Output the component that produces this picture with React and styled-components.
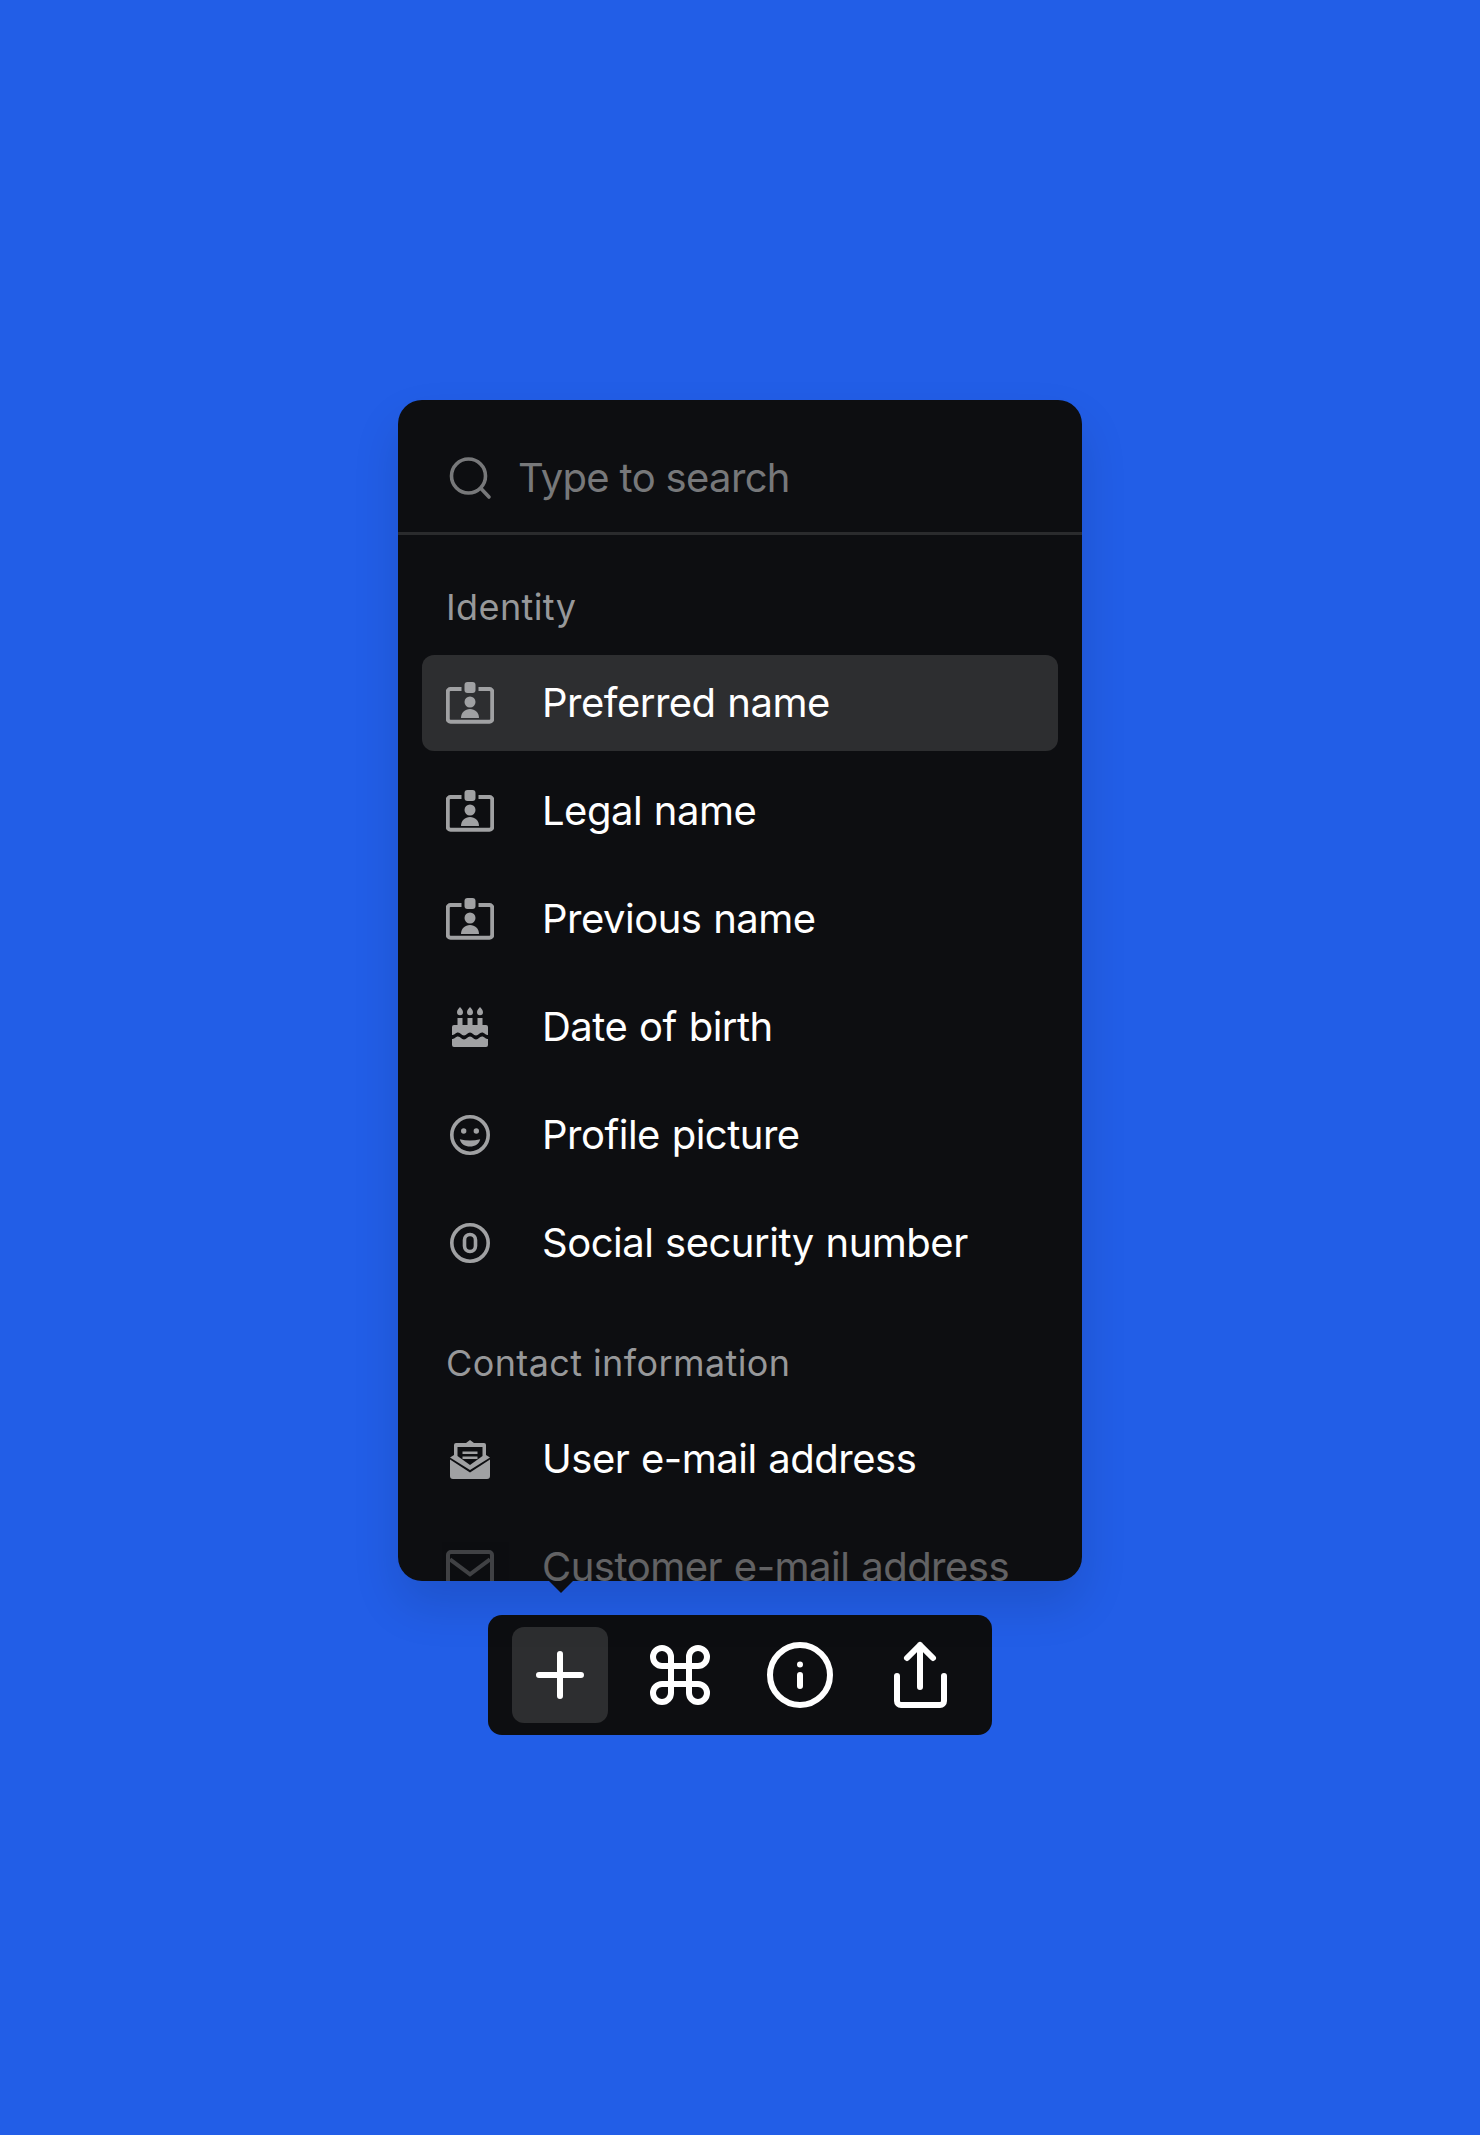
import React from 'react';
import styled, { createGlobalStyle } from 'styled-components';

const GlobalStyle = createGlobalStyle`
  html, body {
    margin: 0;
    padding: 0;
    background: #225ee7;
    font-family: Inter, "Liberation Sans", sans-serif;
  }
`;

const Page = styled.div`
  display: flex;
  flex-direction: column;
  align-items: center;
  justify-content: center;
  gap: 34px;
  height: 2135px;
  background: #225ee7;
`;

const Panel = styled.div`
  position: relative;
  width: 684px;
  height: 1181px;
  border-radius: 24px;
  box-shadow: 0 24px 48px rgba(0, 0, 0, 0.12);

  &::after {
    content: '';
    position: absolute;
    left: 151px;
    bottom: -12px;
    border-left: 12px solid transparent;
    border-right: 12px solid transparent;
    border-top: 12px solid #0d0e11;
  }
`;

const PanelBody = styled.div`
  height: 100%;
  border-radius: 24px;
  background: #0d0e11;
  overflow: hidden;
`;

const Search = styled.div`
  display: flex;
  align-items: center;
  gap: 24px;
  padding: 54px 48px 30px;
  border-bottom: 3px solid #2a2b2d;
`;

const Placeholder = styled.span`
  font-size: 40px;
  line-height: 48px;
  letter-spacing: -0.65px;
  color: #77787a;
`;

const Section = styled.div`
  display: flex;
  flex-direction: column;
  gap: 12px;
  padding: 48px 24px 0;
`;

const Label = styled.div`
  height: 48px;
  margin-bottom: 12px;
  padding-left: 24px;
  font-size: 36px;
  line-height: 48px;
  letter-spacing: 0.4px;
  color: #97989a;
`;

const Row = styled.div`
  display: flex;
  align-items: center;
  gap: 48px;
  flex: none;
  height: 96px;
  padding: 0 24px;
  border-radius: 12px;
  background: ${p => (p.$active ? '#2d2e30' : 'transparent')};
  opacity: ${p => (p.$dim ? 0.35 : 1)};
`;

const RowText = styled.span`
  font-size: 40px;
  line-height: 48px;
  font-weight: 425;
  letter-spacing: -0.5px;
  word-spacing: 1px;
  color: #fff;
`;

const Icon = styled.svg`
  display: block;
  flex: none;
  width: 48px;
  height: 48px;
`;

const Toolbar = styled.div`
  display: flex;
  gap: 24px;
  padding: 12px 24px;
  border-radius: 14px;
  background: #0d0e11;
`;

const ToolButton = styled.button`
  display: flex;
  align-items: center;
  justify-content: center;
  width: 96px;
  height: 96px;
  padding: 0;
  border: none;
  border-radius: 12px;
  background: ${p => (p.$active ? '#2d2e30' : 'transparent')};
`;

const ToolIcon = styled.svg`
  display: block;
  width: 96px;
  height: 96px;
  fill: none;
  stroke: #fff;
  stroke-width: 6;
  stroke-linecap: round;
  stroke-linejoin: round;
`;

const GRAY = '#a0a1a3';

const SearchIcon = () => (
  <Icon viewBox="0 0 48 48" fill="none" stroke="#77787a" strokeWidth="3.6" strokeLinecap="round">
    <circle cx="22.5" cy="22" r="17" />
    <path d="M35 34.500 43 43" />
  </Icon>
);

const BadgeIcon = () => (
  <Icon viewBox="0 0 48 48" fill="none">
    <path
      d="M15.500 10H4.500a2.750 2.750 0 0 0-2.750 2.750V40a2.750 2.750 0 0 0 2.750 2.750h39A2.750 2.750 0 0 0 46.250 40V12.750A2.750 2.750 0 0 0 43.500 10H32.500"
      stroke={GRAY}
      strokeWidth="4"
    />
    <rect x="18.500" y="3" width="11" height="11" rx="3" fill={GRAY} />
    <circle cx="24" cy="23" r="5.500" fill={GRAY} />
    <path d="M15 39c0-5.500 4-9 9-9s9 3.500 9 9z" fill={GRAY} />
  </Icon>
);

const CakeIcon = () => (
  <Icon viewBox="0 0 48 48" fill={GRAY}>
    <path d="M14 4c1.500 1.700 3 3.300 3 5.300a3 3 0 0 1-6 0C11 7.300 12.500 5.700 14 4z" />
    <path d="M24 4c1.500 1.700 3 3.300 3 5.300a3 3 0 0 1-6 0C21 7.300 22.500 5.700 24 4z" />
    <path d="M34 4c1.500 1.700 3 3.300 3 5.300a3 3 0 0 1-6 0C31 7.300 32.500 5.700 34 4z" />
    <path d="M11.500 15h5v7h5v-7h5v7h5v-7h5v7H40a2 2 0 0 1 2 2v8c-3 0-3.500-2.500-6-2.500s-3.500 3-6 3-3.500-3-6-3-3.500 3-6 3-3.500-3-6-3-3 2.500-6 2.500v-8a2 2 0 0 1 2-2h3.500z" />
    <path d="M6 36c3 0 3.500-2.500 6-2.500s3.500 3 6 3 3.500-3 6-3 3.500 3 6 3 3.500-3 6-3 3 2.500 6 2.500v6a2 2 0 0 1-2 2H8a2 2 0 0 1-2-2z" />
  </Icon>
);

const SmileIcon = () => (
  <Icon viewBox="0 0 48 48" fill="none">
    <circle cx="24" cy="24" r="18.200" stroke={GRAY} strokeWidth="3.600" />
    <circle cx="17.700" cy="20" r="2.700" fill={GRAY} />
    <circle cx="30.300" cy="20" r="2.700" fill={GRAY} />
    <path d="M13.800 28.200Q24 31 34.200 28.200C33 33 29 35.500 24 35.500S15 33 13.800 28.200z" fill={GRAY} />
  </Icon>
);

const ZeroIcon = () => (
  <Icon viewBox="0 0 48 48" fill="none" stroke={GRAY} strokeWidth="3.600">
    <circle cx="24" cy="24" r="18.200" />
    <rect x="18.500" y="15.500" width="11" height="17" rx="5.500" />
  </Icon>
);

const MailOpenIcon = () => (
  <Icon viewBox="0 0 48 48" fill="none">
    <path d="M24 5l4 3h10a2 2 0 0 1 2 2v10l4 2.500L24 35 4 22.500 8 20V10a2 2 0 0 1 2-2h10z" fill={GRAY} />
    <path d="M11.500 12h25v9L24 30 11.500 21z" fill="#0d0e11" />
    <path d="M16.500 17.700h15M16.500 22.700h15" stroke={GRAY} strokeWidth="2.500" />
    <path d="M4 24.500l20 13 20-13V41a3 3 0 0 1-3 3H7a3 3 0 0 1-3-3z" fill={GRAY} />
  </Icon>
);

const MailIcon = () => (
  <Icon viewBox="0 0 48 48" fill="none" stroke={GRAY} strokeWidth="4">
    <rect x="2" y="9" width="44" height="33" rx="3" />
    <path d="M4 16.300 24 31.300 44 16.300" />
  </Icon>
);

const PlusIcon = () => (
  <ToolIcon viewBox="0 0 96 96">
    <path d="M48 27v42M27 48h42" />
  </ToolIcon>
);

const CommandIcon = () => (
  <ToolIcon viewBox="-12 -12 96 96">
    <path d="M45 18v36a9 9 0 1 0 9-9H18a9 9 0 1 0 9 9V18a9 9 0 1 0-9 9h36a9 9 0 1 0-9-9" />
  </ToolIcon>
);

const InfoIcon = () => (
  <ToolIcon viewBox="0 0 96 96">
    <circle cx="48" cy="48" r="30" />
    <path d="M48 48v11M48 37.500v.1" />
  </ToolIcon>
);

const ShareIcon = () => (
  <ToolIcon viewBox="0 0 96 96">
    <path d="M25 49v25a4 4 0 0 0 4 4h39a4 4 0 0 0 4-4V49" />
    <path d="M48 60V18M35 31l13-13 13 13" />
  </ToolIcon>
);

const identity = [
  { text: 'Preferred name', icon: <BadgeIcon />, active: true },
  { text: 'Legal name', icon: <BadgeIcon /> },
  { text: 'Previous name', icon: <BadgeIcon /> },
  { text: 'Date of birth', icon: <CakeIcon /> },
  { text: 'Profile picture', icon: <SmileIcon /> },
  { text: 'Social security number', icon: <ZeroIcon /> },
];

const contact = [
  { text: 'User e-mail address', icon: <MailOpenIcon /> },
  { text: 'Customer e-mail address', icon: <MailIcon />, dim: true },
];

const renderRow = item => (
  <Row key={item.text} $active={item.active} $dim={item.dim}>
    {item.icon}
    <RowText>{item.text}</RowText>
  </Row>
);

export default function App() {
  return (
    <Page>
      <GlobalStyle />
      <Panel>
        <PanelBody>
          <Search>
            <SearchIcon />
            <Placeholder>Type to search</Placeholder>
          </Search>
          <Section>
            <Label>Identity</Label>
            {identity.map(renderRow)}
          </Section>
          <Section>
            <Label>Contact information</Label>
            {contact.map(renderRow)}
          </Section>
        </PanelBody>
      </Panel>
      <Toolbar>
        <ToolButton $active><PlusIcon /></ToolButton>
        <ToolButton><CommandIcon /></ToolButton>
        <ToolButton><InfoIcon /></ToolButton>
        <ToolButton><ShareIcon /></ToolButton>
      </Toolbar>
    </Page>
  );
}
